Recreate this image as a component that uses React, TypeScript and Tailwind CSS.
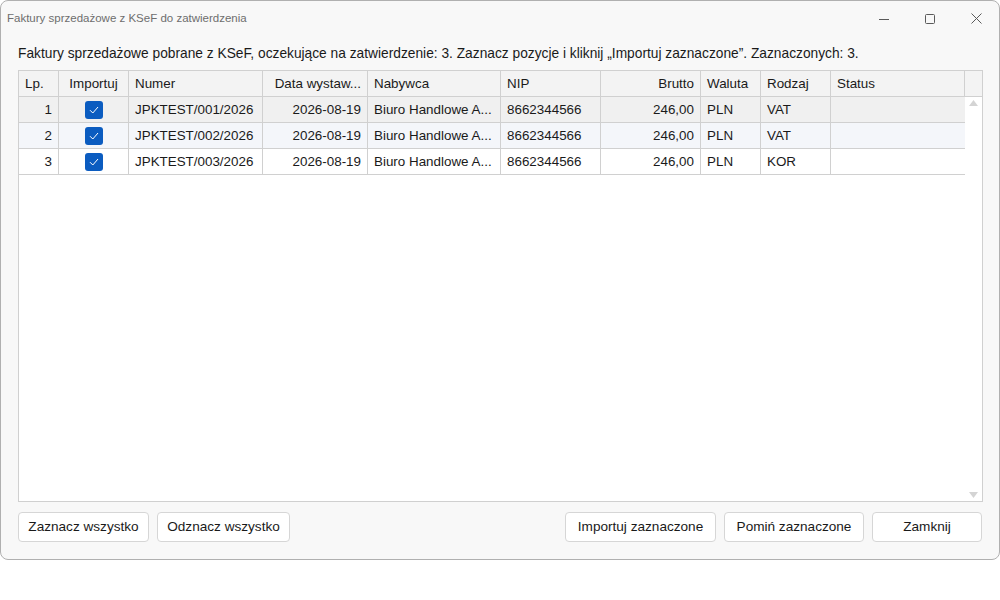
import { ReactNode } from "react"

const cols = [
  { w: "w-[40px]", align: "text-right" },
  { w: "w-[70px]", align: "text-center" },
  { w: "w-[134px]", align: "text-left" },
  { w: "w-[105px]", align: "text-right" },
  { w: "w-[133px]", align: "text-left" },
  { w: "w-[100px]", align: "text-left" },
  { w: "w-[100px]", align: "text-right" },
  { w: "w-[60px]", align: "text-left" },
  { w: "w-[70px]", align: "text-left" },
  { w: "w-[134px]", align: "text-left" },
]

const headers = ["Lp.", "Importuj", "Numer", "Data wystaw...", "Nabywca", "NIP", "Brutto", "Waluta", "Rodzaj", "Status"]
const headerAlign = ["text-left", "text-center", "text-left", "text-right", "text-left", "text-left", "text-right", "text-left", "text-left", "text-left"]

const rows = [
  { lp: "1", nr: "JPKTEST/001/2026", kind: "VAT", bg: "bg-[#f0f0f0]" },
  { lp: "2", nr: "JPKTEST/002/2026", kind: "VAT", bg: "bg-[#f4f6fa]" },
  { lp: "3", nr: "JPKTEST/003/2026", kind: "KOR", bg: "bg-white" },
]

function Check() {
  return (
    <span className="inline-flex size-[18px] items-center justify-center rounded-[3px] bg-[#0b5cc0] align-middle">
      <svg width="10" height="8" viewBox="0 0 10 8" fill="none">
        <path d="M1 4.2 L3.8 7 L9 1" stroke="white" strokeWidth="1" />
      </svg>
    </span>
  )
}

function Btn({ children, w }: { children: ReactNode; w: string }) {
  return (
    <button className={`${w} h-[30px] rounded-[4px] border border-[#d6d6d6] bg-white text-[13.6px] text-[#1a1a1a]`}>
      {children}
    </button>
  )
}

export default function App() {
  return (
    <div className="h-[600px] w-[1000px] bg-white font-['Liberation_Sans',sans-serif] text-[#1a1a1a]">
      <div className="flex h-[560px] w-[1000px] flex-col overflow-hidden rounded-[8px] border border-[#b0b0b0] bg-[#f8f8f8]">
        {/* title bar */}
        <div className="flex h-[35px] shrink-0 items-center justify-between">
          <span className="pl-[6px] text-[11.5px] text-[#6e6e6e]">Faktury sprzedażowe z KSeF do zatwierdzenia</span>
          <div className="flex h-full items-center text-[#5a5a5a]">
            <div className="flex w-[46px] justify-center">
              <svg width="10" height="10" viewBox="0 0 10 10"><path d="M0 5.5h10" stroke="currentColor" strokeWidth="1" /></svg>
            </div>
            <div className="flex w-[46px] justify-center">
              <svg width="10" height="10" viewBox="0 0 10 10"><rect x="0.5" y="0.5" width="9" height="9" rx="1" fill="none" stroke="currentColor" strokeWidth="1" /></svg>
            </div>
            <div className="flex w-[46px] justify-center">
              <svg width="11" height="11" viewBox="0 0 11 11"><path d="M0.5 0.5l10 10M10.5 0.5l-10 10" stroke="currentColor" strokeWidth="1" /></svg>
            </div>
          </div>
        </div>

        <div className="flex flex-1 flex-col px-[17px]">
          <p className="pt-[9px] pb-[7px] text-[13.75px] leading-[18px]">
            Faktury sprzedażowe pobrane z KSeF, oczekujące na zatwierdzenie: 3. Zaznacz pozycje i kliknij „Importuj zaznaczone”. Zaznaczonych: 3.
          </p>

          {/* table */}
          <div className="flex h-[432px] w-[965px] flex-col border border-[#d0d0d0] bg-white text-[13.4px]">
            <div className="flex h-[26px] shrink-0 border-b border-[#d0d0d0] bg-[#f3f3f3]">
              {cols.map((c, i) => (
                <div key={i} className={`${c.w} ${headerAlign[i]} shrink-0 border-r border-[#d0d0d0] px-[6px] leading-[25px]`}>
                  {headers[i]}
                </div>
              ))}
              <div className="flex-1" />
            </div>
            <div className="flex flex-1">
              <div className="flex flex-col">
                {rows.map((r) => {
                  const cells: ReactNode[] = [r.lp, <Check />, r.nr, "2026-08-19", "Biuro Handlowe A...", "8662344566", "246,00", "PLN", r.kind, ""]
                  return (
                    <div key={r.lp} className={`flex h-[26px] border-b border-[#d0d0d0] ${r.bg}`}>
                      {cols.map((c, i) => (
                        <div
                          key={i}
                          className={`${c.w} ${c.align} shrink-0 px-[6px] leading-[25px] whitespace-nowrap ${i < 9 ? "border-r border-[#d0d0d0]" : ""}`}
                        >
                          {cells[i]}
                        </div>
                      ))}
                    </div>
                  )
                })}
              </div>
              <div className="flex flex-1 flex-col items-center justify-between py-[3px]">
                <svg width="9" height="6" viewBox="0 0 9 6"><path d="M4.5 0L9 6H0z" fill="#d4d4d4" /></svg>
                <svg width="9" height="6" viewBox="0 0 9 6"><path d="M0 0h9L4.5 6z" fill="#d4d4d4" /></svg>
              </div>
            </div>
          </div>

          {/* buttons */}
          <div className="mt-[10px] flex items-center">
            <Btn w="w-[131px]">Zaznacz wszystko</Btn>
            <div className="w-[8px]" />
            <Btn w="w-[133px]">Odznacz wszystko</Btn>
            <div className="flex-1" />
            <Btn w="w-[151px]">Importuj zaznaczone</Btn>
            <div className="w-[8px]" />
            <Btn w="w-[140px]">Pomiń zaznaczone</Btn>
            <div className="w-[8px]" />
            <Btn w="w-[110px]">Zamknij</Btn>
          </div>
        </div>
      </div>
    </div>
  )
}
